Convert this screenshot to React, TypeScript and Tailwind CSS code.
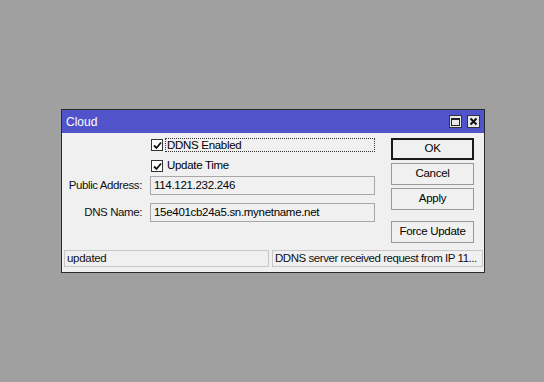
import React from 'react';

const font = { fontFamily: '"Liberation Sans", Arial, sans-serif' };

function Check({ checked }: { checked: boolean }) {
  return (
    <span className="w-[12px] h-[12px] border border-[#333] bg-white flex items-center justify-center shrink-0">
      {checked && (
        <svg width="9" height="9" viewBox="0 0 9 9">
          <path d="M1 4.5 L3.5 7 L8 1.5" stroke="#111" strokeWidth="1.8" fill="none" />
        </svg>
      )}
    </span>
  );
}

function Field({ label, value }: { label: string; value: string }) {
  return (
    <div className="flex items-center h-[19px]">
      <div className="w-[88px] text-right pr-[8px] text-[11.5px] tracking-[-0.4px] text-[#111] whitespace-nowrap">{label}</div>
      <div className="w-[225px] h-full border border-[#a8a8a8] bg-[#f0f0f0] flex items-center px-[3px] text-[11.5px] tracking-[-0.3px] text-black">
        {value}
      </div>
    </div>
  );
}

function Btn({ label, primary }: { label: string; primary?: boolean }) {
  return (
    <div
      className={
        'w-[83px] h-[22px] flex items-center justify-center text-[11.5px] tracking-[-0.3px] text-black bg-[#f0f0f0] ' +
        (primary ? 'border-2 border-[#1a1a1a]' : 'border border-[#9a9a9a]')
      }
    >
      {label}
    </div>
  );
}

export default function App() {
  return (
    <div className="w-[544px] h-[382px] bg-[#a0a0a0] pt-[109px] pl-[61px]" style={font}>
      <div className="w-[424px] h-[164px] border border-[#2a2a2a] bg-[#f0f0f0] flex flex-col">
        <div className="h-[23px] bg-[#5053c9] flex items-center justify-between pl-[4px] pr-[4px]">
          <span className="text-white text-[12px]">Cloud</span>
          <div className="flex gap-[5px]">
            <span className="w-[13px] h-[13px] bg-[#e8e8e8] border border-[#333] flex items-center justify-center">
              <span className="w-[9px] h-[8px] border border-[#222] border-t-2" />
            </span>
            <span className="w-[13px] h-[13px] bg-[#e8e8e8] border border-[#333] flex items-center justify-center">
              <svg width="9" height="9" viewBox="0 0 9 9">
                <path d="M1.5 1.5 L7.5 7.5 M7.5 1.5 L1.5 7.5" stroke="#111" strokeWidth="2" />
              </svg>
            </span>
          </div>
        </div>
        <div className="flex flex-1 pt-[5px]">
          <div className="w-[329px] flex flex-col">
            <div className="flex items-center h-[14px] pl-[89px]">
              <Check checked />
              <span className="ml-[2px] w-[210px] h-[14px] border border-dotted border-[#333] text-[11.5px] tracking-[-0.3px] leading-[12px] pl-[1px] text-black">
                DDNS Enabled
              </span>
            </div>
            <div className="flex items-center h-[14px] mt-[7px] pl-[89px]">
              <Check checked />
              <span className="ml-[4px] text-[11.5px] tracking-[-0.3px] text-black">Update Time</span>
            </div>
            <div className="mt-[3px] flex flex-col gap-[8px]">
              <Field label="Public Address:" value="114.121.232.246" />
              <Field label="DNS Name:" value="15e401cb24a5.sn.mynetname.net" />
            </div>
          </div>
          <div className="flex flex-col gap-[3px]">
            <Btn label="OK" primary />
            <Btn label="Cancel" />
            <Btn label="Apply" />
            <div className="mt-[8px]">
              <Btn label="Force Update" />
            </div>
          </div>
        </div>
        <div className="flex h-[17px] mb-[5px] pl-[2px] pr-[1px] gap-[3px]">
          <div className="w-[205px] border border-[#c8c8c8] flex items-center px-[2px] text-[11.5px] tracking-[-0.3px] text-[#111]">updated</div>
          <div className="flex-1 border border-[#c8c8c8] flex items-center px-[2px] text-[11.5px] tracking-[-0.45px] text-[#111] whitespace-nowrap overflow-hidden">
            DDNS server received request from IP 11...
          </div>
        </div>
      </div>
    </div>
  );
}
